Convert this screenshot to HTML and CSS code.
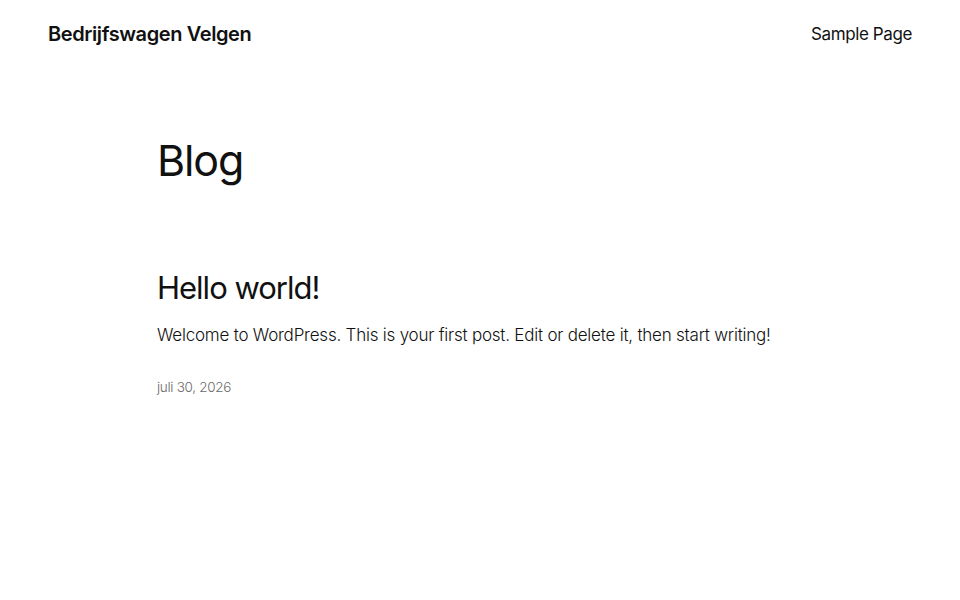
FILE: index.html
```html
<!DOCTYPE html>
<html lang="nl">
<head>
<meta charset="utf-8">
<title>Blog – Bedrijfswagen Velgen</title>
<link rel="stylesheet" href="styles.css">
</head>
<body>
<header class="site-header">
  <a class="site-title" href="#">Bedrijfswagen Velgen</a>
  <nav class="site-nav"><a href="#">Sample Page</a></nav>
</header>
<main class="content">
  <h1 class="page-title">Blog</h1>
  <article class="post">
    <h2 class="post-title">Hello world!</h2>
    <p class="post-excerpt">Welcome to WordPress. This is your first post. Edit or delete it, then start writing!</p>
    <div class="post-date">juli 30, 2026</div>
  </article>
</main>
</body>
</html>
```
FILE: styles.css
```css
html, body {
  margin: 0;
  padding: 0;
  background: #fff;
}
body {
  font-family: Inter, "Noto Sans", sans-serif;
  color: #111111;
  -webkit-font-smoothing: antialiased;
}
a { color: inherit; text-decoration: none; }

.site-header {
  display: flex;
  justify-content: space-between;
  align-items: center;
  padding: 20px 48px 0 48px;
  height: 28px;
}
.site-title {
  font-size: 20px;
  font-weight: 600;
  letter-spacing: -0.4px;
}
.site-nav {
  font-size: 17px;
  font-weight: 400;
  letter-spacing: -0.4px;
}

.content {
  width: 646px;
  margin: 0 auto;
  padding-top: 87px;
}
.page-title {
  margin: 0;
  font-size: 43px;
  font-weight: 400;
  letter-spacing: -1.1px;
  line-height: 1.2;
}
.post {
  margin-top: 82px;
}
.post-title {
  margin: 0;
  font-size: 31px;
  font-weight: 400;
  letter-spacing: -1px;
  line-height: 1.2;
}
.post-excerpt {
  margin: 17px 0 0 0;
  font-size: 17px;
  font-weight: 300;
  letter-spacing: -0.22px;
  line-height: 1.5;
}
.post-date {
  margin-top: 31px;
  font-size: 13.5px;
  font-weight: 300;
  color: #6b6b6b;
  letter-spacing: -0.3px;
}
```
